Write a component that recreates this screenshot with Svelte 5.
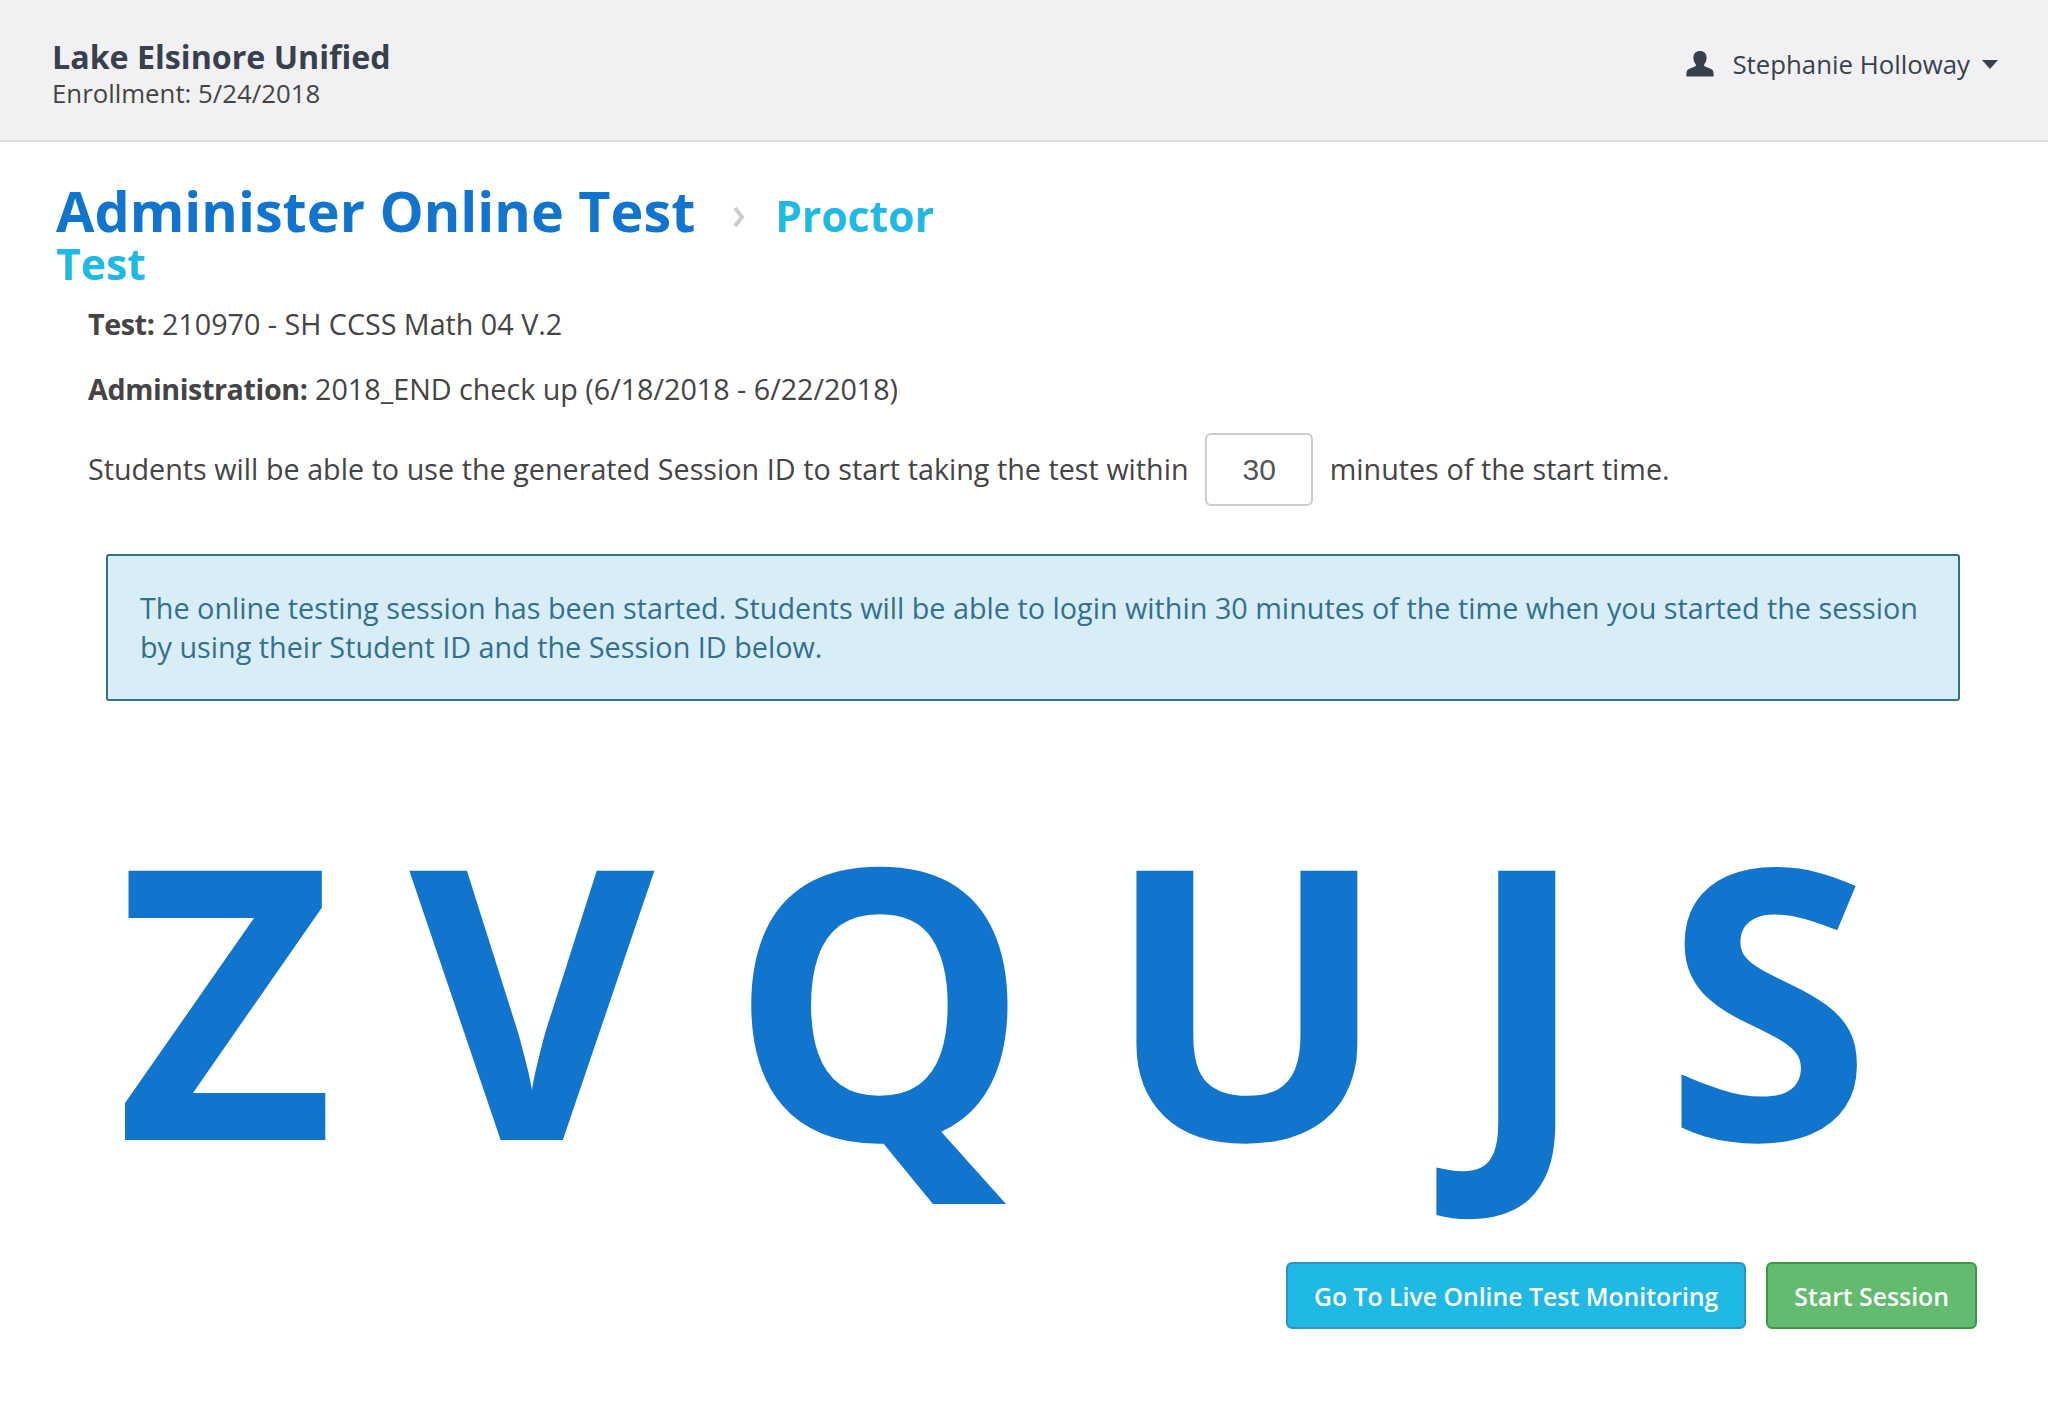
<script>
	let minutes = $state(30);
	const session_id = 'ZVQUJS';
</script>

<div class="page">
	<header class="top_bar">
		<div class="district">
			<div class="district_name">Lake Elsinore Unified</div>
			<div class="enrollment">Enrollment: 5/24/2018</div>
		</div>
		<div class="user_menu">
			<svg class="user_icon" width="28" height="26" viewBox="0 0 28 26"><path fill="currentColor" d="M14 0c4 0 6.600 2.700 6.600 6.800 0 2.400-.9 4.800-2.100 6.200-.8 1-.5 2.100.6 2.600 2.200 1 5.200 1.900 6.900 3 1.200.8 1.700 3 1.700 5.900 0 .5-.3.900-.9.900H1.200c-.6 0-.9-.4-.9-.9 0-2.900.5-5.100 1.700-5.900 1.700-1.100 4.700-2 6.900-3 1.100-.5 1.400-1.600.6-2.600-1.200-1.400-2.100-3.800-2.100-6.200C7.400 2.700 10 0 14 0z"/></svg>
			<span class="user_name">Stephanie Holloway</span>
			<span class="caret"></span>
		</div>
	</header>

	<main class="content">
		<h1 class="heading">
			<span class="heading_main">Administer Online Test</span>
			<svg class="crumb_arrow" width="14" height="22" viewBox="0 0 14 22"><path d="M3 2l7 9-7 9" fill="none" stroke="currentColor" stroke-width="4"/></svg>
			<span class="heading_sub">Proctor Test</span>
		</h1>

		<div class="details">
			<p class="line_test"><b>Test:</b> 210970 - SH CCSS Math 04 V.2</p>
			<p class="line_admin"><b>Administration:</b> 2018_END check up (6/18/2018 - 6/22/2018)</p>
			<p class="line_window">
				Students will be able to use the generated Session ID to start taking the test within
				<input class="minutes_input" type="text" bind:value={minutes} />
				minutes of the start time.
			</p>
		</div>

		<div class="alert_info">
			The online testing session has been started. Students will be able to login within 30 minutes of the time when you started the session by using their Student ID and the Session ID below.
		</div>

		<div class="session_id">
			{#each session_id as letter}
				<span>{letter}</span>
			{/each}
		</div>

		<div class="actions">
			<button class="btn btn_info">Go To Live Online Test Monitoring</button>
			<button class="btn btn_success">Start Session</button>
		</div>
	</main>
</div>

<style>
	:global(body) {
		margin: 0;
		background: #ffffff;
		font-family: 'Open Sans', sans-serif;
		color: #444444;
	}

	.page {
		min-height: 1418px;
	}

	.top_bar {
		display: flex;
		justify-content: space-between;
		align-items: center;
		box-sizing: border-box;
		height: 142px;
		padding: 7px 50px 0 52px;
		background: #f1f1f4;
		border-bottom: 2px solid #dddddd;
		color: #38404d;
	}

	.district_name {
		font-size: 32.200px;
		font-weight: 700;
		line-height: 40px;
	}

	.enrollment {
		font-size: 25.800px;
		line-height: 33px;
		color: #444444;
	}

	.user_menu {
		display: flex;
		align-items: center;
		font-size: 25.800px;
		margin-top: -19px;
	}

	.user_icon {
		margin-right: 18px;
	}

	.caret {
		width: 0;
		height: 0;
		margin-left: 12px;
		border-left: 8.500px solid transparent;
		border-right: 8.500px solid transparent;
		border-top: 9px solid #38404d;
	}

	.content {
		padding: 0 0 0 56px;
	}

	.heading {
		margin: 46px 0 0;
		width: 900px;
		font-weight: 400;
		line-height: 44px;
	}

	.heading_main {
		font-size: 55.700px;
		font-weight: 700;
		color: #1174cd;
	}

	.crumb_arrow {
		margin: 0 21px 0 28px;
		color: #cccccc;
		vertical-align: 4px;
	}

	.heading_sub {
		font-size: 42.700px;
		font-weight: 700;
		color: #1fb9e3;
	}

	.details {
		margin: 14px 0 0 32px;
		font-size: 28.700px;
	}

	.details p {
		margin: 0;
	}

	.details b {
		font-weight: 700;
		letter-spacing: -0.400px;
	}

	.line_admin {
		margin-top: 26px !important;
	}

	.line_window {
		margin-top: 25px !important;
		word-spacing: 0.170px;
	}

	.minutes_input {
		box-sizing: border-box;
		width: 108px;
		height: 73px;
		margin: 0 9px;
		border: 2px solid #cccccc;
		border-radius: 6px;
		background: #ffffff;
		color: #555555;
		font-family: 'Liberation Sans', sans-serif;
		font-size: 30px;
		text-align: center;
	}

	.alert_info {
		box-sizing: border-box;
		width: 1854px;
		height: 147px;
		margin: 48px 0 0 50px;
		padding: 32px 28px 32px 32px;
		border: 2px solid #31708f;
		border-radius: 3px;
		background: #d9edf7;
		color: #31708f;
		font-size: 28.770px;
		line-height: 39px;
	}

	.session_id {
		display: flex;
		margin: 43px 0 0 60px;
		font-size: 377px;
		font-weight: 700;
		line-height: 500px;
		height: 500px;
		color: #1174cd;
		gap: 75px;
	}

	.actions {
		display: flex;
		justify-content: flex-end;
		gap: 20px;
		padding-right: 71px;
		margin-top: 18px;
	}

	.btn {
		height: 67px;
		padding: 0 26px;
		border-radius: 6px;
		border: 2px solid;
		color: #ffffff;
		font-family: 'Open Sans', sans-serif;
		font-size: 24.800px;
		font-weight: 600;
	}

	.btn_info {
		background: #1fb9e3;
		border-color: #2a93d0;
	}

	.btn_success {
		background: #62bb6e;
		border-color: #3a9a42;
	}
</style>
